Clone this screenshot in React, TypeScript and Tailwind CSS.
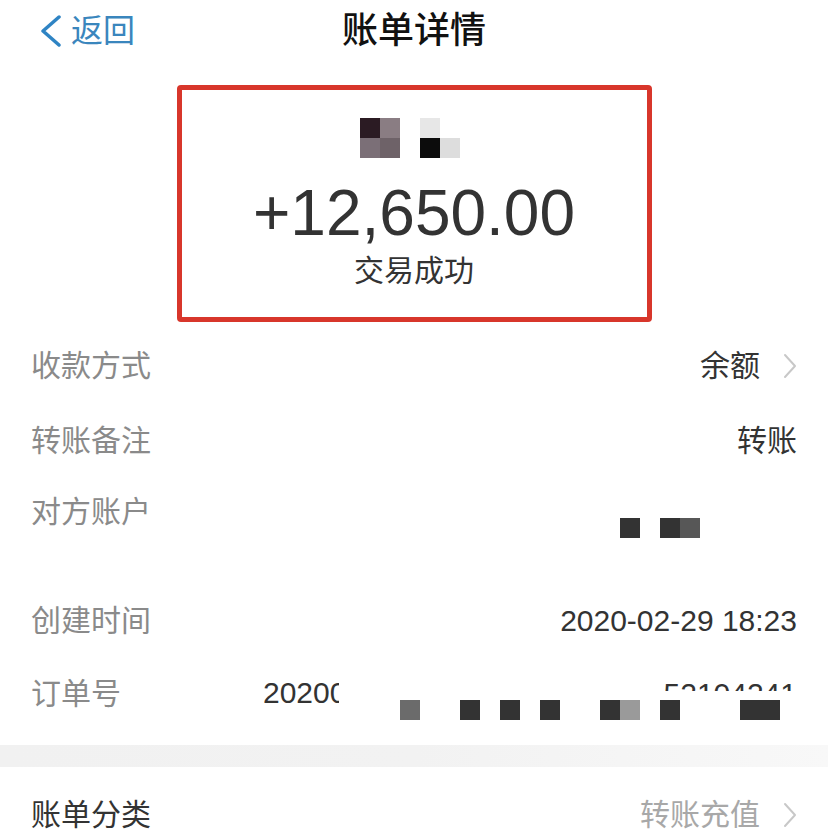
import React from 'react';

const Chevron = () => (
  <svg width="14" height="26" viewBox="0 0 14 26" fill="none">
    <path d="M2 2L12 13L2 24" stroke="#c8c8c8" strokeWidth="2" strokeLinecap="round" strokeLinejoin="round" />
  </svg>
);

// pixelated redaction over the payer name
const nameMosaic = [
  ['#2b1b23', '#8a7d83', 'transparent', '#e7e7e7', 'transparent'],
  ['#7b6f77', '#6e6268', 'transparent', '#0c0c0c', '#dddddd'],
];

export default function App() {
  return (
    <div className="w-[828px] h-[830px] overflow-hidden bg-white font-['Liberation_Sans','Noto_Sans_CJK_SC',sans-serif]">
      {/* Header */}
      <div className="grid grid-cols-3 items-center h-[62px]">
        <div className="flex items-center gap-[9px] pl-[40px]">
          <svg width="22" height="32" viewBox="0 0 22 32" fill="none">
            <path d="M19 2L3 16L19 30" stroke="#2f84c4" strokeWidth="3.5" strokeLinecap="round" strokeLinejoin="round" />
          </svg>
          <span className="text-[32px] leading-[32px] text-[#3a86bd]">返回</span>
        </div>
        <h1 className="justify-self-center text-[36px] leading-[36px] font-medium text-[#111] whitespace-nowrap">账单详情</h1>
        <div />
      </div>

      {/* Amount box */}
      <div className="mx-auto mt-[23px] w-[475px] h-[237px] border-[5px] border-[#d8362b] rounded-[4px] flex flex-col">
        <div className="ml-[178px] mt-[28px] flex flex-col">
          {nameMosaic.map((row, i) => (
            <div key={i} className="flex">
              {row.map((c, j) => (
                <div key={j} className="w-[20px] h-[20px]" style={{ backgroundColor: c }} />
              ))}
            </div>
          ))}
        </div>
        <div className="mt-[23px] text-center text-[64px] leading-[64px] text-[#333]">+12,650.00</div>
        <div className="mt-[11px] text-center text-[30px] leading-[30px] text-[#333]">交易成功</div>
      </div>

      {/* Detail rows */}
      <div className="mt-[7px] px-[31px]">
        <div className="flex items-center h-[74px]">
          <span className="text-[30px] leading-[30px] text-[#8a8a8a]">收款方式</span>
          <div className="ml-auto flex items-center gap-[23px]">
            <span className="text-[30px] leading-[30px] text-[#333]">余额</span>
            <Chevron />
          </div>
        </div>
        <div className="flex items-center h-[75px]">
          <span className="text-[30px] leading-[30px] text-[#8a8a8a]">转账备注</span>
          <span className="ml-auto text-[30px] leading-[30px] text-[#333]">转账</span>
        </div>
        <div className="flex items-start h-[106px]">
          <span className="mt-[19px] text-[30px] leading-[30px] text-[#8a8a8a]">对方账户</span>
          <div className="ml-auto mr-[97px] mt-[40px] flex">
            <div className="w-[20px] h-[20px] bg-[#333]" />
            <div className="ml-[20px] w-[20px] h-[20px] bg-[#333]" />
            <div className="w-[20px] h-[20px] bg-[#575757]" />
          </div>
        </div>
        <div className="flex items-center h-[74px]">
          <span className="text-[30px] leading-[30px] text-[#8a8a8a]">创建时间</span>
          <span className="ml-auto text-[30px] leading-[30px] text-[#333]">2020-02-29 18:23</span>
        </div>
        <div className="relative flex items-center h-[72px]">
          <span className="text-[30px] leading-[30px] text-[#8a8a8a]">订单号</span>
          <div className="ml-[142px] w-[76px] overflow-hidden">
            <span className="text-[30px] leading-[30px] text-[#333] whitespace-nowrap">202003</span>
          </div>
          <div className="ml-auto self-start mt-[21px] h-[12px] overflow-hidden">
            <div className="text-[30px] leading-[30px] text-[#333]">52104241</div>
          </div>
          {/* redaction blocks */}
          <div className="absolute left-[369px] top-[42px] flex h-[20px]">
            <div className="w-[20px] bg-[#6b6b6b]" />
            <div className="ml-[40px] w-[20px] bg-[#333]" />
            <div className="ml-[20px] w-[20px] bg-[#333]" />
            <div className="ml-[20px] w-[20px] bg-[#333]" />
            <div className="ml-[40px] w-[20px] bg-[#333]" />
            <div className="w-[20px] bg-[#9a9a9a]" />
            <div className="ml-[20px] w-[20px] bg-[#333]" />
            <div className="ml-[60px] w-[40px] bg-[#333]" />
          </div>
        </div>
      </div>

      <div className="mt-[15px] h-[22px] bg-gradient-to-r from-[#f1f1f1] via-[#f2f2f2] to-[#f8f8f8]" />

      <div className="px-[31px] pt-[33px] flex items-center">
        <span className="text-[30px] leading-[30px] text-[#333]">账单分类</span>
        <div className="ml-auto flex items-center gap-[23px]">
          <span className="text-[30px] leading-[30px] text-[#a8a8a8]">转账充值</span>
          <Chevron />
        </div>
      </div>
    </div>
  );
}
